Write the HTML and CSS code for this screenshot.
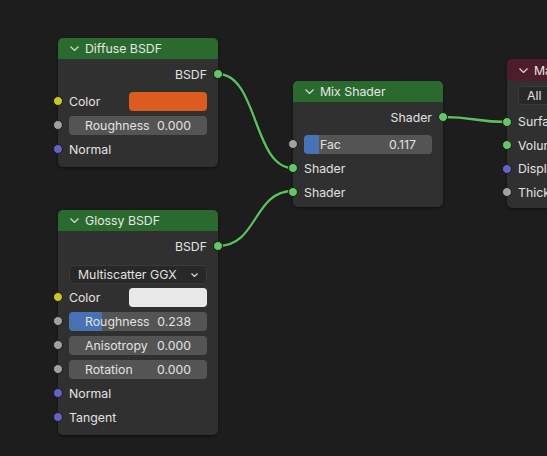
FILE: index.html
```html
<!DOCTYPE html>
<html>
<head>
<meta charset="utf-8">
<link rel="stylesheet" href="styles.css">
</head>
<body>
<div class="canvas">
  <svg class="wires" width="547" height="456" viewBox="0 0 547 456">
    <g class="wire-outline">
      <path d="M218,74 C258,74 253,168 293,168"/>
      <path d="M218,246 C258,246 253,191 293,191"/>
      <path d="M443,117 C475,117 475,122 507,122"/>
    </g>
    <g class="wire">
      <path d="M218,74 C258,74 253,168 293,168"/>
      <path d="M218,246 C258,246 253,191 293,191"/>
      <path d="M443,117 C475,117 475,122 507,122"/>
    </g>
  </svg>

  <div class="node node-diffuse">
    <div class="head green">
      <svg class="chev" width="9" height="5" viewBox="0 0 9 5"><polyline points="0.5,0.5 4.5,4.5 8.5,0.5"/></svg>
      <span>Diffuse BSDF</span>
    </div>
    <div class="body">
      <div class="row out"><span>BSDF</span><i class="sock s-green sock-out"></i></div>
      <div class="spacer"></div>
      <div class="row"><i class="sock s-yellow"></i><span class="lbl">Color</span><div class="swatch orange"></div></div>
      <div class="row"><i class="sock s-grey"></i><div class="field"><span>Roughness</span><span>0.000</span></div></div>
      <div class="row"><i class="sock s-purple"></i><span class="lbl">Normal</span></div>
    </div>
  </div>

  <div class="node node-glossy">
    <div class="head green">
      <svg class="chev" width="9" height="5" viewBox="0 0 9 5"><polyline points="0.5,0.5 4.5,4.5 8.5,0.5"/></svg>
      <span>Glossy BSDF</span>
    </div>
    <div class="body">
      <div class="row out"><span>BSDF</span><i class="sock s-green sock-out"></i></div>
      <div class="spacer"></div>
      <div class="row row-drop">
        <div class="drop"><span>Multiscatter GGX</span>
          <svg class="dchev" width="7" height="4" viewBox="0 0 7 4"><polyline points="0.5,0.5 3.5,3.5 6.5,0.5"/></svg>
        </div>
      </div>
      <div class="row"><i class="sock s-yellow"></i><span class="lbl">Color</span><div class="swatch white"></div></div>
      <div class="row"><i class="sock s-grey"></i><div class="field fill" style="--v:23.8%"><span>Roughness</span><span>0.238</span></div></div>
      <div class="row"><i class="sock s-grey"></i><div class="field"><span>Anisotropy</span><span>0.000</span></div></div>
      <div class="row"><i class="sock s-grey"></i><div class="field"><span>Rotation</span><span>0.000</span></div></div>
      <div class="row"><i class="sock s-purple"></i><span class="lbl">Normal</span></div>
      <div class="row"><i class="sock s-purple"></i><span class="lbl">Tangent</span></div>
    </div>
  </div>

  <div class="node node-mix">
    <div class="head green">
      <svg class="chev" width="9" height="5" viewBox="0 0 9 5"><polyline points="0.5,0.5 4.5,4.5 8.5,0.5"/></svg>
      <span>Mix Shader</span>
    </div>
    <div class="body">
      <div class="row out"><span>Shader</span><i class="sock s-green sock-out"></i></div>
      <div class="spacer"></div>
      <div class="row"><i class="sock s-grey"></i><div class="field fill" style="--v:11.7%"><span>Fac</span><span>0.117</span></div></div>
      <div class="row"><i class="sock s-green"></i><span class="lbl">Shader</span></div>
      <div class="row"><i class="sock s-green"></i><span class="lbl">Shader</span></div>
    </div>
  </div>

  <div class="node node-output">
    <div class="head red">
      <svg class="chev" width="9" height="5" viewBox="0 0 9 5"><polyline points="0.5,0.5 4.5,4.5 8.5,0.5"/></svg>
      <span>Material Output</span>
    </div>
    <div class="body">
      <div class="drop drop-all"><span>All</span></div>
      <div class="row r-out"><i class="sock s-green"></i><span class="lbl">Surface</span></div>
      <div class="row r-out"><i class="sock s-green"></i><span class="lbl">Volume</span></div>
      <div class="row r-out"><i class="sock s-purple"></i><span class="lbl">Displacement</span></div>
      <div class="row r-out"><i class="sock s-grey"></i><span class="lbl">Thickness</span></div>
    </div>
  </div>
</div>
</body>
</html>
```

FILE: styles.css
```css
html, body {
  margin: 0;
  padding: 0;
  background: #1d1d1d;
  overflow: hidden;
}
.canvas {
  position: relative;
  width: 547px;
  height: 456px;
  overflow: hidden;
  font-family: "Inter", "DejaVu Sans", sans-serif;
  font-size: 12.3px;
  color: #e2e2e2;
}
.wires {
  position: absolute;
  left: 0;
  top: 0;
}
.wire-outline path {
  fill: none;
  stroke: #1a1a1a;
  stroke-width: 4;
}
.wire path {
  fill: none;
  stroke: #5cc05c;
  stroke-width: 2.3;
}
.node {
  position: absolute;
  background: #303030;
  border-radius: 5px;
  box-shadow: 0 1px 3px rgba(0,0,0,0.5);
}
.node-diffuse { left: 58px; top: 38px; width: 160px; }
.node-glossy { left: 58px; top: 210px; width: 160px; }
.node-mix { left: 293px; top: 81px; width: 150px; }
.node-output { left: 507px; top: 59px; width: 150px; }

.head {
  height: 21px;
  display: flex;
  align-items: center;
  gap: 6px;
  padding-left: 12px;
  border-radius: 5px 5px 0 0;
  color: #e6e6e6;
}
.head.green { background: #2b6a2e; }
.head.red { background: #4f1d29; height: 22px; }
.chev polyline, .dchev polyline {
  fill: none;
  stroke: #d8d8d8;
  stroke-width: 1.2;
}
.body {
  display: flex;
  flex-direction: column;
  padding: 3px 11px 6px;
}
.node-mix .body { padding-bottom: 3px; }
.node-output .body { padding: 5px 11px 4px; }
.row {
  position: relative;
  height: 24px;
  display: flex;
  align-items: center;
}
.row.r-out { height: 23.5px; }
.row.out { justify-content: flex-end; }
.spacer { height: 3px; }
.lbl { flex: 1; }
.sock {
  position: absolute;
  left: -16px;
  top: 50%;
  width: 8px;
  height: 8px;
  margin-top: -5px;
  border-radius: 50%;
  border: 1px solid #1b1b1b;
}
.sock.sock-out { left: auto; right: -16px; }
.s-green { background: #63c763; }
.s-yellow { background: #c7c729; }
.s-grey { background: #a1a1a1; }
.s-purple { background: #6363c7; }

.swatch {
  width: 78px;
  height: 19px;
  border-radius: 4px;
}
.swatch.orange { background: #dc5b1f; }
.swatch.white { background: #e8e8e8; }

.field {
  flex: 1;
  height: 19px;
  border-radius: 4px;
  background: #545454;
  display: flex;
  align-items: center;
  justify-content: space-between;
  padding: 0 16px;
  box-sizing: border-box;
}
.field.fill {
  background: linear-gradient(to right, #4772b3 var(--v), #545454 var(--v));
}
.row-drop { align-items: flex-start; padding-top: 4px; box-sizing: border-box; }
.drop {
  flex: 1;
  height: 19px;
  box-sizing: border-box;
  border: 1px solid #3a3a3a;
  background: #282828;
  border-radius: 4px;
  display: flex;
  align-items: center;
  justify-content: space-between;
  padding: 0 8px;
}
.drop-all {
  flex: none;
  height: 19px;
  margin-bottom: 5px;
  justify-content: flex-start;
  padding-left: 8px;
}
```
